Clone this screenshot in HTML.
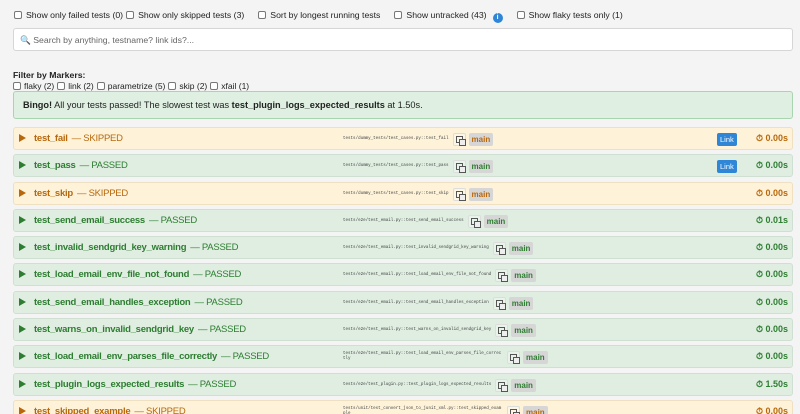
<!DOCTYPE html>
<html><head><meta charset="utf-8">
<style>
*{box-sizing:border-box;margin:0;padding:0}
html,body{width:800px;height:414px;overflow:hidden;background:#f4f4f4;font-family:"Liberation Sans",sans-serif;color:#222;position:relative}
.cb{display:inline-block;width:8px;height:8px;border:1px solid #777;border-radius:2px;background:#fff;vertical-align:-1px;margin-right:4px}
.top{position:absolute;top:10px;left:14px;font-size:8.7px;white-space:nowrap}
.top span.i{margin-right:14px}
.info{display:inline-block;width:10px;height:10px;border-radius:50%;background:#2f86d6;color:#fff;font-size:7px;text-align:center;line-height:10px;vertical-align:-1px;margin-right:14px;font-weight:bold}
.search{position:absolute;left:13px;top:28px;width:780px;height:23px;background:#fff;border:1px solid #d6d6d6;border-radius:3px;font-size:8.7px;color:#666;padding:6px 6px}
.fm{position:absolute;left:13px;top:70px;font-size:8.7px;font-weight:bold}
.mk{position:absolute;left:13px;top:81px;font-size:8.5px;white-space:nowrap}
.mk span{margin-right:3px}
.bingo{position:absolute;left:13px;top:91px;width:780px;height:28px;background:#dff0e2;border:1px solid #a9d4b0;border-radius:3px;font-size:9.2px;padding:8px 9px}
.row{position:absolute;left:13px;width:780px;height:23px;border-radius:3px;border:1px solid #d8e3da;font-size:9.5px;letter-spacing:-0.25px}
.p{background:#dfeee1;color:#2e7d32;border-color:#cfe0d2}
.s{background:#fef3d9;color:#b8680c;border-color:#eee0c0}
.tri{position:absolute;left:5px;top:6px;width:0;height:0;border-left:7px solid currentColor;border-top:4.5px solid transparent;border-bottom:4.5px solid transparent}
.nm{position:absolute;left:20px;top:5px;white-space:nowrap}
.nm b{margin-right:4px}
.path{position:absolute;left:329px;top:3px;display:flex;align-items:center;height:16px;letter-spacing:0}
.path code{font-family:"Liberation Mono",monospace;font-size:4.2px;color:#444;max-width:155px;line-height:5px}
.cp{width:13px;height:13px;border:1px solid #ddd;border-radius:2px;margin-left:4px;position:relative;background:rgba(255,255,255,.3);flex:none}
.cp:before,.cp:after{content:"";position:absolute;width:5px;height:5px;border:1px solid #555}
.cp:before{left:2px;top:2px}.cp:after{left:5px;top:5px;background:#eee}
.main{font-size:8px;font-weight:bold;background:#d6d6d6;padding:2px 3px;border-radius:2px;margin-left:3px}
.link{position:absolute;left:703px;top:5px;background:#2f86d6;color:#fff;font-size:7.5px;padding:2px 3px;border-radius:2px;letter-spacing:0}
.dur{position:absolute;right:4px;top:5px;font-weight:bold;font-size:9px;letter-spacing:0}
</style></head><body>
<div class="top"><span class="i"><span class="cb"></span>Show only failed tests (0)</span><span class="i" style="margin-left:-11px"><span class="cb"></span>Show only skipped tests (3)</span><span class="i"><span class="cb"></span>Sort by longest running tests</span><span style="margin-right:6px"><span class="cb"></span>Show untracked (43)</span><span class="info">i</span><span><span class="cb"></span>Show flaky tests only (1)</span></div>
<div class="search">🔍 Search by anything, testname? link ids?...</div>
<div class="fm">Filter by Markers:</div>
<div class="mk"><span><span class="cb"></span>flaky (2)</span><span><span class="cb"></span>link (2)</span><span><span class="cb"></span>parametrize (5)</span><span><span class="cb"></span>skip (2)</span><span><span class="cb"></span>xfail (1)</span></div>
<div class="bingo"><b>Bingo!</b> All your tests passed! The slowest test was <b>test_plugin_logs_expected_results</b> at 1.50s.</div>

<div class="row s" style="top:127px"><i class="tri"></i><div class="nm"><b>test_fail</b>— SKIPPED</div><div class="path"><code>tests/dummy_tests/test_cases.py::test_fail</code><span class="cp"></span><span class="main">main</span></div><span class="link">Link</span><span class="dur">⏱ 0.00s</span></div>
<div class="row p" style="top:154px"><i class="tri"></i><div class="nm"><b>test_pass</b>— PASSED</div><div class="path"><code>tests/dummy_tests/test_cases.py::test_pass</code><span class="cp"></span><span class="main">main</span></div><span class="link">Link</span><span class="dur">⏱ 0.00s</span></div>
<div class="row s" style="top:182px"><i class="tri"></i><div class="nm"><b>test_skip</b>— SKIPPED</div><div class="path"><code>tests/dummy_tests/test_cases.py::test_skip</code><span class="cp"></span><span class="main">main</span></div><span class="dur">⏱ 0.00s</span></div>
<div class="row p" style="top:209px"><i class="tri"></i><div class="nm"><b>test_send_email_success</b>— PASSED</div><div class="path"><code>tests/e2e/test_email.py::test_send_email_success</code><span class="cp"></span><span class="main">main</span></div><span class="dur">⏱ 0.01s</span></div>
<div class="row p" style="top:236px"><i class="tri"></i><div class="nm"><b>test_invalid_sendgrid_key_warning</b>— PASSED</div><div class="path"><code style="max-width:170px">tests/e2e/test_email.py::test_invalid_sendgrid_key_warning</code><span class="cp"></span><span class="main">main</span></div><span class="dur">⏱ 0.00s</span></div>
<div class="row p" style="top:263px"><i class="tri"></i><div class="nm"><b>test_load_email_env_file_not_found</b>— PASSED</div><div class="path"><code style="max-width:170px">tests/e2e/test_email.py::test_load_email_env_file_not_found</code><span class="cp"></span><span class="main">main</span></div><span class="dur">⏱ 0.00s</span></div>
<div class="row p" style="top:291px"><i class="tri"></i><div class="nm"><b>test_send_email_handles_exception</b>— PASSED</div><div class="path"><code style="max-width:170px">tests/e2e/test_email.py::test_send_email_handles_exception</code><span class="cp"></span><span class="main">main</span></div><span class="dur">⏱ 0.00s</span></div>
<div class="row p" style="top:318px"><i class="tri"></i><div class="nm"><b>test_warns_on_invalid_sendgrid_key</b>— PASSED</div><div class="path"><code style="max-width:170px">tests/e2e/test_email.py::test_warns_on_invalid_sendgrid_key</code><span class="cp"></span><span class="main">main</span></div><span class="dur">⏱ 0.00s</span></div>
<div class="row p" style="top:345px"><i class="tri"></i><div class="nm"><b>test_load_email_env_parses_file_correctly</b>— PASSED</div><div class="path"><code style="max-width:160px;word-break:break-all">tests/e2e/test_email.py::test_load_email_env_parses_file_correctly</code><span class="cp"></span><span class="main">main</span></div><span class="dur">⏱ 0.00s</span></div>
<div class="row p" style="top:373px"><i class="tri"></i><div class="nm"><b>test_plugin_logs_expected_results</b>— PASSED</div><div class="path"><code style="max-width:170px">tests/e2e/test_plugin.py::test_plugin_logs_expected_results</code><span class="cp"></span><span class="main">main</span></div><span class="dur">⏱ 1.50s</span></div>
<div class="row s" style="top:400px"><i class="tri"></i><div class="nm"><b>test_skipped_example</b>— SKIPPED</div><div class="path"><code style="max-width:160px;word-break:break-all">tests/unit/test_convert_json_to_junit_xml.py::test_skipped_example</code><span class="cp"></span><span class="main">main</span></div><span class="dur">⏱ 0.00s</span></div>
</body></html>
